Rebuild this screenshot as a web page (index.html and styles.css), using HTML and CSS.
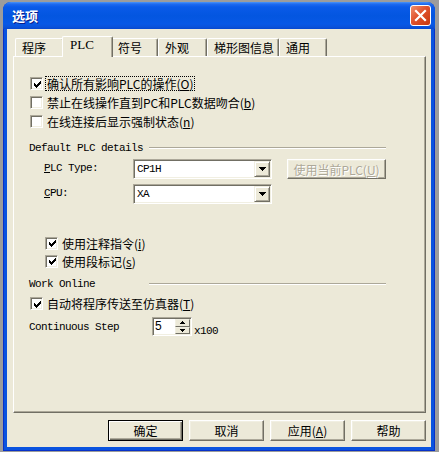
FILE: index.html
```html
<!DOCTYPE html>
<html>
<head>
<meta charset="utf-8">
<link rel="stylesheet" href="styles.css">
</head>
<body>
<div class="window">
  <div class="titlebar">
    <span class="title">选项</span>
    <span class="close"><svg width="19" height="19" viewBox="0 0 19 19"><path d="M5 5 L14 14 M14 5 L5 14" stroke="#fff" stroke-width="2.2" stroke-linecap="square"/></svg></span>
  </div>
  <div class="client">
    <div class="tabs">
      <div class="tab tw49">程序</div>
      <div class="tab active tw47">PLC</div>
      <div class="tab tw47">符号</div>
      <div class="tab tw49">外观</div>
      <div class="tab tw72">梯形图信息</div>
      <div class="tab tw48">通用</div>
    </div>
    <div class="panel">
      <div class="check-row first">
        <span class="cb"><svg width="7" height="7" viewBox="0 0 7 7" shape-rendering="crispEdges"><path d="M0 2h1v3h-1z M1 3h1v3h-1z M2 4h1v3h-1z M3 3h1v3h-1z M4 2h1v3h-1z M5 1h1v3h-1z M6 0h1v3h-1z" fill="#000"/></svg></span>
        <span class="lbl focus">确认所有影响PLC的操作(<u>O</u>)</span>
      </div>
      <div class="check-row">
        <span class="cb"></span>
        <span class="lbl">禁止在线操作直到PC和PLC数据吻合(<u>b</u>)</span>
      </div>
      <div class="check-row">
        <span class="cb"></span>
        <span class="lbl">在线连接后显示强制状态(<u>n</u>)</span>
      </div>

      <div class="group-head g1">
        <span class="group-title mono">Default PLC details</span>
        <span class="group-line"></span>
      </div>
      <div class="form-row fr1">
        <span class="form-label mono"><u>P</u>LC Type:</span>
        <span class="combo"><span class="combo-text mono">CP1H</span><span class="drop"><svg width="7" height="4" viewBox="0 0 7 4" shape-rendering="crispEdges"><path d="M0 0h7v1h-7z M1 1h5v1h-5z M2 2h3v1h-3z M3 3h1v1h-1z" fill="#000"/></svg></span></span>
        <span class="btn disabled use-plc">使用当前PLC(<u>U</u>)</span>
      </div>
      <div class="form-row fr2">
        <span class="form-label mono"><u>C</u>PU:</span>
        <span class="combo"><span class="combo-text mono">XA</span><span class="drop"><svg width="7" height="4" viewBox="0 0 7 4" shape-rendering="crispEdges"><path d="M0 0h7v1h-7z M1 1h5v1h-5z M2 2h3v1h-3z M3 3h1v1h-1z" fill="#000"/></svg></span></span>
      </div>

      <div class="check-row indent short cr4">
        <span class="cb"><svg width="7" height="7" viewBox="0 0 7 7" shape-rendering="crispEdges"><path d="M0 2h1v3h-1z M1 3h1v3h-1z M2 4h1v3h-1z M3 3h1v3h-1z M4 2h1v3h-1z M5 1h1v3h-1z M6 0h1v3h-1z" fill="#000"/></svg></span>
        <span class="lbl">使用注释指令(<u>i</u>)</span>
      </div>
      <div class="check-row indent short">
        <span class="cb"><svg width="7" height="7" viewBox="0 0 7 7" shape-rendering="crispEdges"><path d="M0 2h1v3h-1z M1 3h1v3h-1z M2 4h1v3h-1z M3 3h1v3h-1z M4 2h1v3h-1z M5 1h1v3h-1z M6 0h1v3h-1z" fill="#000"/></svg></span>
        <span class="lbl">使用段标记(<u>s</u>)</span>
      </div>

      <div class="group-head g2">
        <span class="group-title mono">Work Online</span>
        <span class="group-line"></span>
      </div>
      <div class="check-row cr6">
        <span class="cb"><svg width="7" height="7" viewBox="0 0 7 7" shape-rendering="crispEdges"><path d="M0 2h1v3h-1z M1 3h1v3h-1z M2 4h1v3h-1z M3 3h1v3h-1z M4 2h1v3h-1z M5 1h1v3h-1z M6 0h1v3h-1z" fill="#000"/></svg></span>
        <span class="lbl">自动将程序传送至仿真器(<u>T</u>)</span>
      </div>
      <div class="spin-row">
        <span class="spin-label mono">Continuous Step</span>
        <span class="spin">
          <span class="spin-text">5</span>
          <span class="spin-btns">
            <span class="spin-btn"><svg width="5" height="3" viewBox="0 0 5 3" shape-rendering="crispEdges"><path d="M2 0h1v1h-1z M1 1h3v1h-3z M0 2h5v1h-5z" fill="#000"/></svg></span>
            <span class="spin-btn"><svg width="5" height="3" viewBox="0 0 5 3" shape-rendering="crispEdges"><path d="M0 0h5v1h-5z M1 1h3v1h-3z M2 2h1v1h-1z" fill="#000"/></svg></span>
          </span>
        </span>
        <span class="unit mono">x100</span>
      </div>
    </div>
    <div class="buttons">
      <span class="btn default">确定</span>
      <span class="btn">取消</span>
      <span class="btn">应用(<u>A</u>)</span>
      <span class="btn">帮助</span>
    </div>
  </div>
</div>
</body>
</html>
```

FILE: styles.css
```css
html, body {
  margin: 0;
  padding: 0;
}
body {
  width: 439px;
  height: 452px;
  background: #9c9c9c;
  overflow: hidden;
  font-family: "Noto Sans CJK SC", "Noto Sans", sans-serif;
  font-size: 12px;
  color: #000;
}
.mono {
  font-family: "Liberation Mono", "DejaVu Sans Mono", monospace;
  font-size: 11px;
  letter-spacing: -0.6px;
}
u { text-decoration: underline; text-underline-offset: 1px; }

.window {
  margin: 2px 0 0 3px;
  width: 432px;
  height: 449px;
  box-sizing: border-box;
  background: #0A53DF;
  border: 1px solid #0831C9;
  border-top: none;
  border-radius: 8px 8px 0 0;
  padding: 0 3px 3px;
  display: flex;
  flex-direction: column;
}
.titlebar {
  height: 27px;
  margin: 0 -4px;
  border-radius: 8px 8px 0 0;
  background: linear-gradient(to bottom, #4A95F8 0px, #1F6BF0 2px, #0A5AE8 5px, #0356E0 14px, #0758E6 22px, #0A52DA 25px, #0648D0 27px);
  display: flex;
  align-items: center;
  padding: 0 4px 0 9px;
  box-sizing: border-box;
}
.title {
  flex: 1;
  color: #fff;
  font-weight: bold;
  font-size: 13px;
  text-shadow: 1px 1px #0A1E8C;
  line-height: 14px;
  padding-top: 1px;
}
.close {
  width: 21px;
  height: 21px;
  box-sizing: border-box;
  border: 1px solid #fff;
  border-radius: 3px;
  background: linear-gradient(135deg, #F0906E 0%, #E0522D 45%, #C8380E 100%);
  display: flex;
  align-items: center;
  justify-content: center;
}

.client {
  flex: 1;
  background: #ECE9D8;
  padding: 7px 5px 0 6px;
  display: flex;
  flex-direction: column;
}

.tabs {
  display: flex;
  align-items: flex-end;
  height: 20px;
  padding-left: 2px;
}
.tab {
  height: 18px;
  box-sizing: border-box;
  border-top: 1px solid #fff;
  border-left: 1px solid #fff;
  border-right: 1px solid #716F64;
  box-shadow: inset -1px 0 #ACA899;
  border-radius: 2px 2px 0 0;
  padding: 2px 0 0 6px;
  line-height: 14px;
  white-space: nowrap;
}
.tab.active {
  height: 21px;
  margin: 0 -2px -1px;
  padding: 1px 0 0 7px;
  background: #ECE9D8;
  position: relative;
  z-index: 1;
  font-family: "Liberation Serif", serif;
  font-size: 13px;
}
.tw49 { width: 49px; }
.tw47 { width: 47px; }
.tw48 { width: 48px; }
.tw72 { width: 72px; }
.tab.active.tw47 { width: 51px; }

.panel {
  height: 357px;
  box-sizing: border-box;
  border: 1px solid;
  border-color: #fff #716F64 #716F64 #fff;
  box-shadow: inset -1px -1px #ACA899;
  padding: 17px 0 0 15px;
  display: flex;
  flex-direction: column;
}

.check-row {
  height: 19px;
  display: flex;
  align-items: center;
  padding-left: 1px;
}
.check-row.indent { padding-left: 16px; }
.check-row.short { height: 18px; }
.cr4 { margin-top: 30px; }
.cr6 { margin-top: 4px; }

.cb {
  width: 13px;
  height: 13px;
  box-sizing: border-box;
  background: #fff;
  border: 1px solid;
  border-color: #ACA899 #fff #fff #ACA899;
  box-shadow: inset 1px 1px #716F64, inset -1px -1px #F1EFE2;
  display: flex;
  align-items: center;
  justify-content: center;
  padding: 1px 0 0 1px;
  flex: none;
}
.lbl {
  margin-left: 2px;
  padding: 0 1px;
  border: 1px dotted transparent;
  line-height: 13px;
  white-space: nowrap;
}
.lbl.focus { border-color: #000; }

.group-head {
  display: flex;
  align-items: center;
  height: 12px;
}
.g1 { margin-top: 11px; }
.g2 { margin-top: 8px; }
.group-title {
  width: 120px;
  line-height: 12px;
  white-space: nowrap;
}
.group-line {
  width: 237px;
  height: 0;
  border-top: 1px solid #ACA899;
  border-bottom: 1px solid #fff;
  margin-top: -1px;
}

.form-row {
  display: flex;
  align-items: center;
  height: 20px;
  padding-left: 15px;
}
.fr1 { margin-top: 5px; }
.fr2 { margin-top: 5px; }
.form-label {
  width: 89px;
  white-space: nowrap;
  margin-top: -2px;
}
.combo {
  width: 139px;
  height: 20px;
  box-sizing: border-box;
  background: #fff;
  border: 1px solid;
  border-color: #ACA899 #fff #fff #ACA899;
  box-shadow: inset 1px 1px #716F64, inset -1px -1px #F1EFE2;
  display: flex;
  align-items: center;
  padding: 1px 1px 1px 3px;
}
.combo-text {
  flex: 1;
  font-size: 11px;
}
.drop {
  width: 16px;
  height: 16px;
  box-sizing: border-box;
  background: #ECE9D8;
  border: 1px solid;
  border-color: #F1EFE2 #716F64 #716F64 #F1EFE2;
  box-shadow: inset 1px 1px #fff, inset -1px -1px #ACA899;
  display: flex;
  align-items: center;
  justify-content: center;
}

.btn {
  width: 75px;
  height: 21px;
  box-sizing: border-box;
  border: 1px solid;
  border-color: #fff #716F64 #716F64 #fff;
  box-shadow: inset -1px -1px #ACA899, inset 1px 1px #F1EFE2;
  display: flex;
  align-items: center;
  justify-content: center;
  line-height: 13px;
  white-space: nowrap;
}
.btn.default {
  border-color: #000;
  box-shadow: inset 1px 1px #fff, inset -1px -1px #716F64, inset -2px -2px #ACA899;
}
.btn.disabled {
  color: #ACA899;
  text-shadow: 1px 1px #fff;
}
.use-plc {
  width: 99px;
  height: 20px;
  margin-left: 15px;
}

.spin-row {
  display: flex;
  align-items: flex-end;
  height: 19px;
  margin-top: 4px;
}
.spin-label {
  width: 123px;
  align-self: center;
  white-space: nowrap;
}
.spin {
  width: 40px;
  height: 19px;
  box-sizing: border-box;
  background: #fff;
  border: 1px solid;
  border-color: #ACA899 #fff #fff #ACA899;
  box-shadow: inset 1px 1px #716F64, inset -1px -1px #F1EFE2;
  display: flex;
  padding: 1px 1px 1px 2px;
}
.spin-text {
  flex: 1;
  font-family: "Liberation Sans", sans-serif;
  font-size: 12px;
  line-height: 14px;
  padding-top: 0;
}
.spin-btns {
  width: 15px;
  display: flex;
  flex-direction: column;
}
.spin-btn {
  flex: 1;
  box-sizing: border-box;
  background: #ECE9D8;
  border: 1px solid;
  border-color: #F1EFE2 #716F64 #716F64 #F1EFE2;
  display: flex;
  align-items: center;
  justify-content: center;
}
.unit {
  margin-left: 2px;
  line-height: 12px;
  margin-bottom: -1px;
}

.buttons {
  display: flex;
  justify-content: flex-end;
  gap: 6px;
  margin-top: 7px;
  padding-right: 0;
}
```
